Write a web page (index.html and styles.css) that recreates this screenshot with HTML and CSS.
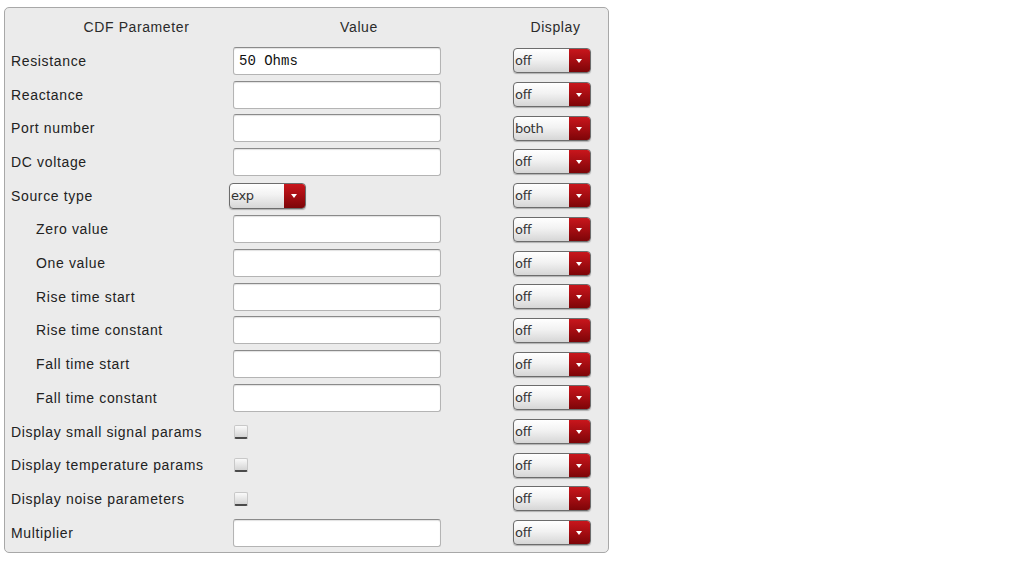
FILE: index.html
```html
<!DOCTYPE html>
<html>
<head>
<meta charset="utf-8">
<link rel="stylesheet" href="styles.css">
</head>
<body>
<div class="panel">
  <div class="hd hd-param">CDF Parameter</div>
  <div class="hd hd-value">Value</div>
  <div class="hd hd-display">Display</div>
  <div class="hd"></div>

  <div class="lbl">Resistance</div>
  <div class="val"><div class="field">50 Ohms</div></div>
  <div class="disp"><div class="combo"><span class="ctext">off</span><span class="carrow"></span></div></div>
  <div></div>

  <div class="lbl">Reactance</div>
  <div class="val"><div class="field"></div></div>
  <div class="disp"><div class="combo"><span class="ctext">off</span><span class="carrow"></span></div></div>
  <div></div>

  <div class="lbl">Port number</div>
  <div class="val"><div class="field"></div></div>
  <div class="disp"><div class="combo"><span class="ctext">both</span><span class="carrow"></span></div></div>
  <div></div>

  <div class="lbl">DC voltage</div>
  <div class="val"><div class="field"></div></div>
  <div class="disp"><div class="combo"><span class="ctext">off</span><span class="carrow"></span></div></div>
  <div></div>

  <div class="lbl">Source type</div>
  <div class="val"><div class="combo combo-src"><span class="ctext">exp</span><span class="carrow"></span></div></div>
  <div class="disp"><div class="combo"><span class="ctext">off</span><span class="carrow"></span></div></div>
  <div></div>

  <div class="lbl ind">Zero value</div>
  <div class="val"><div class="field"></div></div>
  <div class="disp"><div class="combo"><span class="ctext">off</span><span class="carrow"></span></div></div>
  <div></div>

  <div class="lbl ind">One value</div>
  <div class="val"><div class="field"></div></div>
  <div class="disp"><div class="combo"><span class="ctext">off</span><span class="carrow"></span></div></div>
  <div></div>

  <div class="lbl ind">Rise time start</div>
  <div class="val"><div class="field"></div></div>
  <div class="disp"><div class="combo"><span class="ctext">off</span><span class="carrow"></span></div></div>
  <div></div>

  <div class="lbl ind">Rise time constant</div>
  <div class="val"><div class="field"></div></div>
  <div class="disp"><div class="combo"><span class="ctext">off</span><span class="carrow"></span></div></div>
  <div></div>

  <div class="lbl ind">Fall time start</div>
  <div class="val"><div class="field"></div></div>
  <div class="disp"><div class="combo"><span class="ctext">off</span><span class="carrow"></span></div></div>
  <div></div>

  <div class="lbl ind">Fall time constant</div>
  <div class="val"><div class="field"></div></div>
  <div class="disp"><div class="combo"><span class="ctext">off</span><span class="carrow"></span></div></div>
  <div></div>

  <div class="lbl">Display small signal params</div>
  <div class="val"><div class="check"></div></div>
  <div class="disp"><div class="combo"><span class="ctext">off</span><span class="carrow"></span></div></div>
  <div></div>

  <div class="lbl">Display temperature params</div>
  <div class="val"><div class="check"></div></div>
  <div class="disp"><div class="combo"><span class="ctext">off</span><span class="carrow"></span></div></div>
  <div></div>

  <div class="lbl">Display noise parameters</div>
  <div class="val"><div class="check"></div></div>
  <div class="disp"><div class="combo"><span class="ctext">off</span><span class="carrow"></span></div></div>
  <div></div>

  <div class="lbl">Multiplier</div>
  <div class="val"><div class="field"></div></div>
  <div class="disp"><div class="combo"><span class="ctext">off</span><span class="carrow"></span></div></div>
  <div></div>
</div>
</body>
</html>
```

FILE: styles.css
```css
html, body {
  margin: 0;
  padding: 0;
  background: #ffffff;
}

body {
  font-family: "Liberation Sans", Arial, sans-serif;
  color: #1e1e1e;
}

.panel {
  margin: 7px 0 0 4px;
  width: 605px;
  height: 546px;
  border: 1px solid #a8a8a8;
  border-radius: 5px;
  background: #ebebeb;
  display: grid;
  grid-template-columns: 224px 284px 78px 1fr;
  grid-template-rows: 36px repeat(15, 33.71px);
  align-items: center;
  box-sizing: border-box;
}

.hd {
  font-size: 14px;
  letter-spacing: 0.6px;
  color: #2a2a2a;
  text-align: center;
  align-self: center;
  padding-top: 2px;
}

.hd-param { padding-left: 39px; }
.hd-value { padding-right: 24px; }
.hd-display { padding-left: 7px; }

.lbl {
  font-size: 14px;
  letter-spacing: 0.65px;
  padding-left: 6px;
  white-space: nowrap;
  color: #222;
}

.lbl.ind { padding-left: 31px; }

.val {
  display: flex;
  align-items: center;
}

.field {
  margin-left: 4px;
  width: 208px;
  height: 28px;
  box-sizing: border-box;
  background: #ffffff;
  border: 1px solid #b4b4b4;
  border-top-color: #8a8a8a;
  border-radius: 3px;
  box-shadow: inset 0 1px 1px rgba(0,0,0,0.12);
  font-family: "Liberation Mono", "Courier New", monospace;
  font-size: 14px;
  line-height: 26px;
  padding-left: 5px;
  color: #111;
}

.disp {
  display: flex;
  align-items: center;
}

.combo {
  width: 78px;
  height: 25px;
  box-sizing: border-box;
  border: 1px solid #6c6c6c;
  border-radius: 4px;
  display: flex;
  overflow: hidden;
  background: linear-gradient(#ffffff 0%, #f2f2f2 45%, #d6d6d6 100%);
  box-shadow: 0 1px 1px rgba(0,0,0,0.25);
}

.combo-src {
  width: 77px;
  height: 26px;
}

.ctext {
  flex: 1;
  font-family: "DejaVu Sans", "Liberation Sans", sans-serif;
  font-size: 13px;
  line-height: 23px;
  padding-left: 1px;
  color: #333;
  letter-spacing: -0.3px;
}

.carrow {
  width: 21px;
  background: linear-gradient(#c8161c 0%, #a50d12 50%, #7d0508 100%);
  position: relative;
}

.carrow::after {
  content: "";
  position: absolute;
  left: 7px;
  top: 10px;
  border-left: 3.5px solid transparent;
  border-right: 3.5px solid transparent;
  border-top: 4px solid #ffffff;
}

.check {
  margin-left: 5px;
  width: 14px;
  height: 14px;
  box-sizing: border-box;
  border: 1px solid #c8c8c8;
  border-bottom: 2px solid #4a4a4a;
  border-radius: 2px;
  background: linear-gradient(#fafafa, #d4d4d4);
}
```
